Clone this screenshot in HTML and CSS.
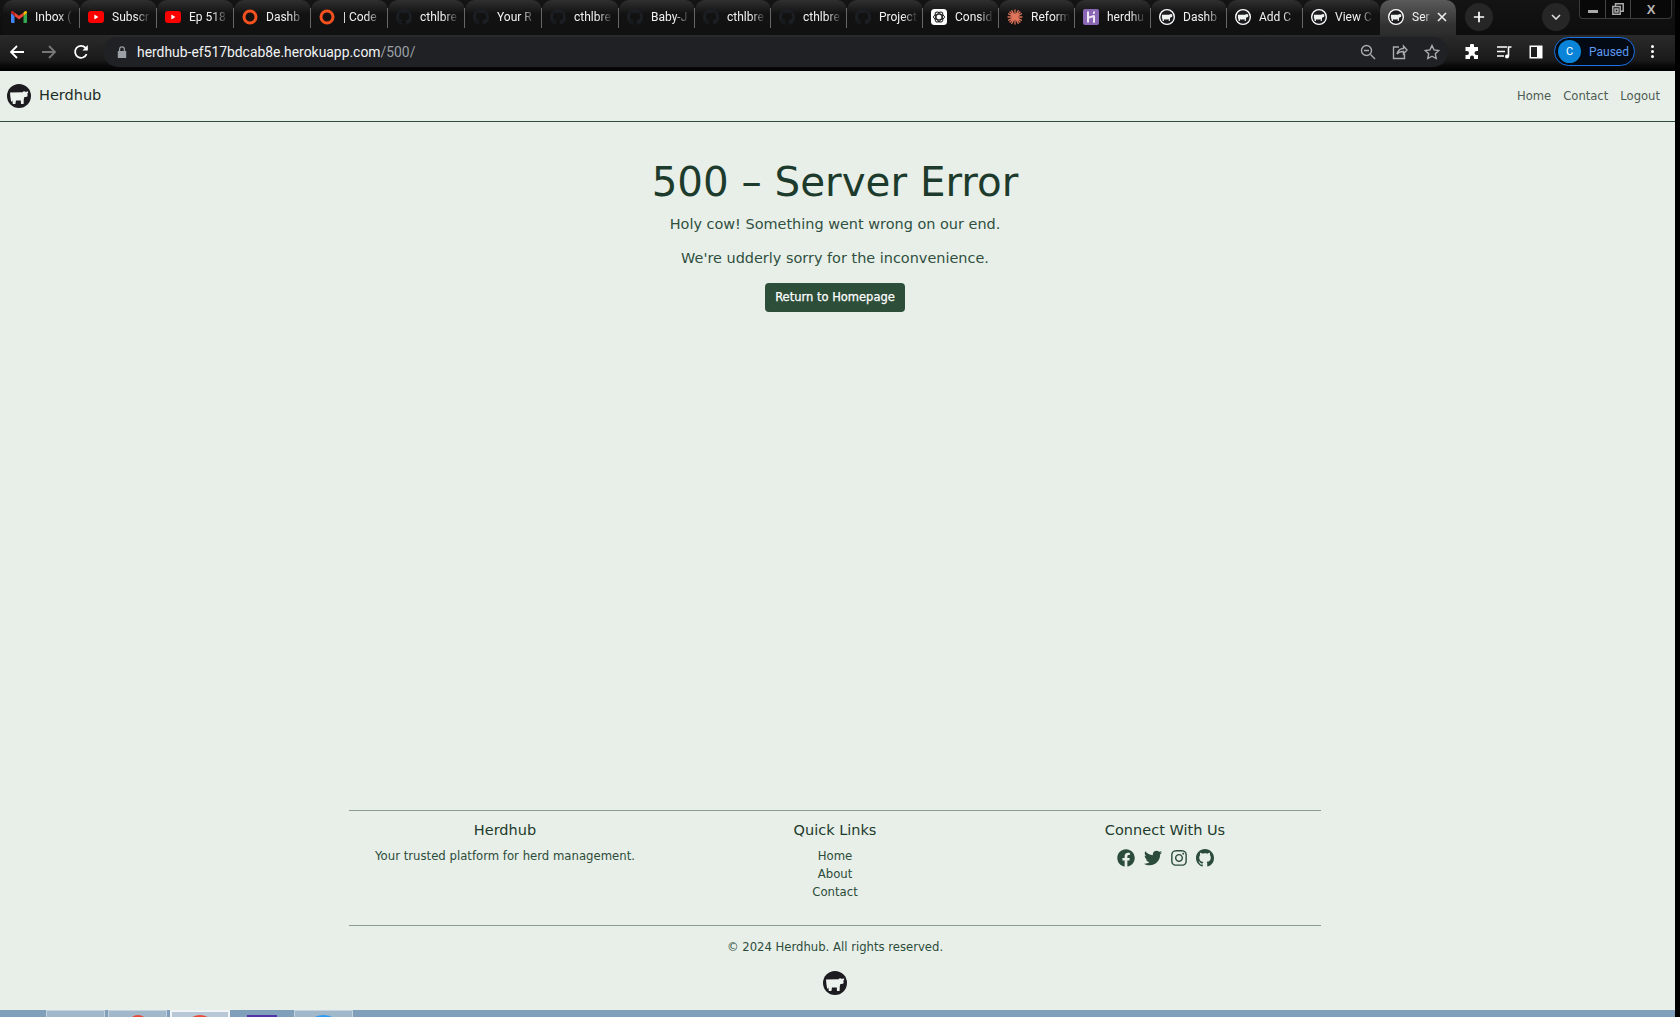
FILE: index.html
```html
<!DOCTYPE html>
<html lang="en">
<head>
<meta charset="utf-8">
<title>Server Error</title>
<link rel="stylesheet" href="styles.css">
</head>
<body>
<svg class="defs" width="0" height="0" aria-hidden="true">
  <symbol id="cow" viewBox="0 0 24 24">
    <circle cx="12" cy="12" r="12" fill="#1b1b20"/>
    <path fill="#eef2ee" d="M3 8.600 15.600 8.200 17 7 18 7.800H20L21 7.200 21.200 8.600 20.400 9.600 20.600 12.200 19 13H17.400L16.800 15.200 16.600 20H14L13.800 16.600H9L8.400 20H5.800L5.400 16.400 4.200 18 3.400 13Z"/>
  </symbol>
  <symbol id="cowring" viewBox="0 0 24 24">
    <circle cx="12" cy="12" r="11" fill="#1b1b20" stroke="#fff" stroke-width="2"/>
    <path fill="#eef2ee" d="M4.400 8.600H15.500L16.600 7.400 17.600 8H19.600L20 9 19.600 12 17.600 12.400 16.600 13.600 16.200 18H14.600L14.500 15.400 12 15.800H8.600L7.600 15.200 7.400 18H5.600L5.200 15.400 4.400 13Z"/>
  </symbol>
  <symbol id="gmail" viewBox="0 0 16 12">
    <path fill="#4285f4" d="M0 2v9a1 1 0 0 0 1 1h2.500V5z"/>
    <path fill="#34a853" d="M16 2v9a1 1 0 0 1-1 1h-2.500V5z"/>
    <path fill="#ea4335" d="M3.500 5 8 8.400 12.500 5V1.400L8 4.800 3.500 1.400z"/>
    <path fill="#c5221f" d="M0 2 3.500 5V1.400L2.400.4C1.400-.3 0 .4 0 1.600z"/>
    <path fill="#fbbc04" d="M16 2 12.500 5V1.400L13.600.4C14.600-.3 16 .4 16 1.600z"/>
  </symbol>
  <symbol id="yt" viewBox="0 0 16 12">
    <rect width="16" height="12" rx="3" fill="#f00"/>
    <path fill="#fff" d="M6.400 3.600 10.400 6 6.400 8.400z"/>
  </symbol>
  <symbol id="ring" viewBox="0 0 16 16">
    <circle cx="8" cy="8" r="6" fill="none" stroke="#f4511e" stroke-width="3"/>
  </symbol>
  <symbol id="gh" viewBox="0 0 16 16">
    <path fill="#1b1f24" d="M8 0C3.580 0 0 3.580 0 8c0 3.540 2.290 6.530 5.470 7.590.4.070.55-.17.55-.38 0-.19-.01-.82-.01-1.490-2.010.37-2.530-.49-2.690-.94-.09-.23-.48-.94-.82-1.130-.28-.15-.68-.52-.01-.53.63-.01 1.080.58 1.230.82.72 1.210 1.870.87 2.330.66.07-.52.28-.87.51-1.070-1.780-.2-3.640-.89-3.640-3.950 0-.87.31-1.590.82-2.150-.08-.2-.36-1.020.08-2.120 0 0 .67-.21 2.200.82.64-.18 1.320-.27 2-.27.68 0 1.360.09 2 .27 1.530-1.040 2.200-.82 2.200-.82.44 1.100.16 1.920.08 2.120.51.56.82 1.270.82 2.150 0 3.070-1.870 3.750-3.650 3.950.29.25.54.73.54 1.480 0 1.070-.01 1.930-.01 2.200 0 .21.15.46.55.38A8.013 8.013 0 0 0 16 8c0-4.420-3.580-8-8-8z"/>
  </symbol>
  <symbol id="gpt" viewBox="0 0 16 16">
    <rect width="16" height="16" rx="3.500" fill="#fff"/>
    <g fill="none" stroke="#222" stroke-width="1">
      <ellipse cx="8" cy="8" rx="5.500" ry="2.800"/>
      <ellipse cx="8" cy="8" rx="5.500" ry="2.800" transform="rotate(60 8 8)"/>
      <ellipse cx="8" cy="8" rx="5.500" ry="2.800" transform="rotate(120 8 8)"/>
    </g>
  </symbol>
  <symbol id="burst" viewBox="0 0 16 16">
    <path stroke="#e0745a" stroke-width="1.300" stroke-linecap="round" d="M8 1v14M1 8h14M3 3l10 10M13 3 3 13M4.800 1.600l6.400 12.800M11.200 1.600 4.800 14.400M1.600 4.800l12.800 6.400M14.400 4.800 1.600 11.200"/>
  </symbol>
  <symbol id="heroku" viewBox="0 0 16 16">
    <rect width="16" height="16" rx="2" fill="#8a67b5"/>
    <path fill="#efe9f5" d="M4 2.500h2v5l4-1.300c1.400-.4 2 .4 2 1.500v6h-2V8.200L6 9.500v4H4zM10 2.500h2.200L11.500 5H10z"/>
  </symbol>
</svg>

<div class="screen">
  <header class="chrome">
    <div class="tabstrip">
      <div class="tab"><svg class="fav fav-wide"><use href="#gmail"/></svg><span class="tab-title">Inbox (</span></div>
      <div class="tab"><svg class="fav fav-wide"><use href="#yt"/></svg><span class="tab-title">Subscr</span></div>
      <div class="tab"><svg class="fav fav-wide"><use href="#yt"/></svg><span class="tab-title">Ep 518</span></div>
      <div class="tab"><svg class="fav"><use href="#ring"/></svg><span class="tab-title">Dashb</span></div>
      <div class="tab"><svg class="fav"><use href="#ring"/></svg><span class="tab-title">| Code</span></div>
      <div class="tab"><svg class="fav"><use href="#gh"/></svg><span class="tab-title">cthlbre</span></div>
      <div class="tab"><svg class="fav"><use href="#gh"/></svg><span class="tab-title">Your R</span></div>
      <div class="tab"><svg class="fav"><use href="#gh"/></svg><span class="tab-title">cthlbre</span></div>
      <div class="tab"><svg class="fav"><use href="#gh"/></svg><span class="tab-title">Baby-J</span></div>
      <div class="tab"><svg class="fav"><use href="#gh"/></svg><span class="tab-title">cthlbre</span></div>
      <div class="tab"><svg class="fav"><use href="#gh"/></svg><span class="tab-title">cthlbre</span></div>
      <div class="tab"><svg class="fav"><use href="#gh"/></svg><span class="tab-title">Project</span></div>
      <div class="tab"><svg class="fav"><use href="#gpt"/></svg><span class="tab-title">Consid</span></div>
      <div class="tab"><svg class="fav"><use href="#burst"/></svg><span class="tab-title">Reform</span></div>
      <div class="tab"><svg class="fav"><use href="#heroku"/></svg><span class="tab-title">herdhu</span></div>
      <div class="tab"><svg class="fav"><use href="#cowring"/></svg><span class="tab-title">Dashb</span></div>
      <div class="tab"><svg class="fav"><use href="#cowring"/></svg><span class="tab-title">Add C</span></div>
      <div class="tab"><svg class="fav"><use href="#cowring"/></svg><span class="tab-title">View C</span></div>
      <div class="tab tab-active"><svg class="fav"><use href="#cowring"/></svg><span class="tab-title tab-title-short">Ser</span>
        <svg class="tab-close" viewBox="0 0 10 10"><path d="M1 1l8 8M9 1l-8 8"/></svg></div>
      <div class="newtab"><svg viewBox="0 0 14 14"><path d="M7 1v12M1 7h12"/></svg></div>
      <div class="tabsearch"><svg viewBox="0 0 10 6"><path d="M1 1l4 4 4-4"/></svg></div>
      <div class="winctl">
        <span class="winbtn winbtn-min"><i class="min-bar"></i></span>
        <span class="winbtn winbtn-max"><svg viewBox="0 0 12 12"><path d="M3.500 3V.8h7.700v7.400H8.500M.8 3.500h7.400v7.700H.8zM3 6h3v3H3z"/></svg></span>
        <span class="winbtn winbtn-close">X</span>
      </div>
    </div>
    <div class="toolbar">
      <svg class="navicon" viewBox="0 0 16 16"><path d="M15 8H2M8 2 2 8l6 6"/></svg>
      <svg class="navicon navicon-dim" viewBox="0 0 16 16"><path d="M1 8h13M8 2l6 6-6 6"/></svg>
      <svg class="navicon" viewBox="0 0 16 16"><path d="M13.600 10.200A6 6 0 1 1 12.400 3.600L14 5.200"/><path class="solid" d="M14.800 1v5.400H9.400z"/></svg>
      <div class="omnibox">
        <svg class="lock" viewBox="0 0 10 12"><path d="M2 5V3.300a3 3 0 0 1 6 0V5h1.200v7H.8V5zm1.200 0h3.600V3.300a1.800 1.800 0 0 0-3.600 0z"/></svg>
        <span class="url">herdhub-ef517bdcab8e.herokuapp.com<span class="url-path">/500/</span></span>
        <div class="omni-actions">
          <svg class="omni-icon" viewBox="0 0 16 16"><circle cx="6.500" cy="6.500" r="5"/><path d="M4 6.500h5M10.500 10.500 15 15"/></svg>
          <svg class="omni-icon" viewBox="0 0 16 16"><path d="M7 3H1.500v11.500h11V10M5 10c1-4 4-5.500 6.500-5.500V2L15 6l-3.500 4V7.500C9 7.500 6.500 8 5 10z"/></svg>
          <svg class="omni-icon" viewBox="0 0 16 16"><path d="M8 1.500l2 4.400 4.800.6-3.500 3.300.9 4.700L8 12.200l-4.200 2.300.9-4.700L1.200 6.500 6 5.900z"/></svg>
        </div>
      </div>
      <svg class="tool-icon" viewBox="0 0 16 16"><path class="solid" d="M6 1.500a2 2 0 0 1 4 0V3h4v4h-1.500a2 2 0 0 0 0 4H14v4H10v-1.500a2 2 0 0 0-4 0V15H1.500v-4H3a2 2 0 0 0 0-4H1.500V3H6z"/></svg>
      <svg class="tool-icon" viewBox="0 0 16 16"><path d="M1 3h10M1 7.500h8M1 12h7M12.500 12.500V3h3"/><circle class="solid" cx="11" cy="12.500" r="2"/></svg>
      <svg class="tool-icon" viewBox="0 0 16 16"><path class="solid" d="M1.500 1.500h13v13h-13zM3 3v10h6V3z"/></svg>
      <div class="profile"><span class="avatar">C</span><span class="paused">Paused</span></div>
      <div class="kebab"><i></i><i></i><i></i></div>
    </div>
  </header>

  <div class="page">
    <nav class="navbar">
      <a class="brand"><svg class="cow"><use href="#cow"/></svg><span class="brand-name">Herdhub</span></a>
      <div class="navlinks"><a>Home</a><a>Contact</a><a>Logout</a></div>
    </nav>
    <div class="content">
      <main class="main">
        <h1>500 – Server Error</h1>
        <p class="lead">Holy cow! Something went wrong on our end.</p>
        <p class="lead">We're udderly sorry for the inconvenience.</p>
        <a class="btn">Return to Homepage</a>
      </main>
      <footer class="footer">
        <div class="footer-cols">
          <section class="fcol">
            <h5>Herdhub</h5>
            <p>Your trusted platform for herd management.</p>
          </section>
          <section class="fcol">
            <h5>Quick Links</h5>
            <ul class="flinks"><li>Home</li><li>About</li><li>Contact</li></ul>
          </section>
          <section class="fcol">
            <h5>Connect With Us</h5>
            <div class="socials">
              <svg class="social" viewBox="0 0 512 512"><path d="M504 256C504 119 393 8 256 8S8 119 8 256c0 123.780 90.690 226.380 209.250 245V327.690h-63V256h63v-54.640c0-62.150 37-96.480 93.670-96.480 27.140 0 55.520 4.840 55.520 4.840v61h-31.280c-30.800 0-40.410 19.120-40.410 38.730V256h68.780l-11 71.690h-57.780V501C413.310 482.380 504 379.780 504 256z"/></svg>
              <svg class="social" viewBox="0 0 512 512"><path d="M459.370 151.716c.325 4.548.325 9.097.325 13.645 0 138.720-105.583 298.558-298.558 298.558-59.452 0-114.680-17.219-161.137-47.106 8.447.974 16.568 1.299 25.340 1.299 49.055 0 94.213-16.568 130.274-44.832-46.132-.975-84.792-31.188-98.112-72.772 6.498.974 12.995 1.624 19.818 1.624 9.421 0 18.843-1.300 27.614-3.573-48.081-9.747-84.143-51.980-84.143-102.985v-1.299c13.969 7.797 30.214 12.670 47.431 13.319-28.264-18.843-46.781-51.005-46.781-87.391 0-19.492 5.197-37.360 14.294-52.954 51.655 63.675 129.300 105.258 216.365 109.807-1.624-7.797-2.599-15.918-2.599-24.040 0-57.828 46.782-104.934 104.934-104.934 30.213 0 57.502 12.670 76.670 33.137 23.715-4.548 46.456-13.320 66.599-25.340-7.798 24.366-24.366 44.833-46.132 57.827 21.117-2.273 41.584-8.122 60.426-16.243-14.292 20.791-32.161 39.308-52.628 54.253z"/></svg>
              <svg class="social social-ig" viewBox="0 0 448 512"><path d="M224.100 141c-63.600 0-114.900 51.300-114.900 114.900s51.300 114.900 114.900 114.900S339 319.500 339 255.900 287.700 141 224.100 141zm0 189.600c-41.100 0-74.700-33.500-74.700-74.700s33.500-74.700 74.700-74.700 74.700 33.500 74.700 74.700-33.600 74.700-74.700 74.700zm146.400-194.300c0 14.900-12 26.800-26.800 26.800-14.900 0-26.800-12-26.800-26.800s12-26.800 26.800-26.800 26.800 12 26.800 26.800zm76.100 27.200c-1.700-35.900-9.900-67.700-36.200-93.900-26.200-26.200-58-34.400-93.900-36.200-37-2.100-147.900-2.100-184.900 0-35.800 1.700-67.600 9.900-93.900 36.100s-34.400 58-36.200 93.900c-2.100 37-2.100 147.900 0 184.900 1.700 35.900 9.900 67.700 36.200 93.900s58 34.400 93.900 36.200c37 2.100 147.900 2.100 184.900 0 35.900-1.700 67.700-9.900 93.900-36.200 26.200-26.200 34.400-58 36.200-93.900 2.100-37 2.100-147.800 0-184.800zM398.800 388c-7.800 19.600-22.900 34.700-42.600 42.600-29.500 11.700-99.500 9-132.100 9s-102.700 2.600-132.100-9c-19.600-7.800-34.700-22.900-42.600-42.600-11.700-29.500-9-99.500-9-132.100s-2.600-102.700 9-132.100c7.800-19.600 22.900-34.700 42.600-42.600 29.500-11.700 99.500-9 132.100-9s102.700-2.600 132.100 9c19.600 7.800 34.700 22.900 42.600 42.600 11.700 29.500 9 99.500 9 132.100s2.700 102.700-9 132.100z"/></svg>
              <svg class="social" viewBox="0 0 16 16"><path d="M8 0C3.580 0 0 3.580 0 8c0 3.540 2.290 6.530 5.470 7.590.4.070.55-.17.55-.38 0-.19-.01-.82-.01-1.490-2.010.37-2.530-.49-2.690-.94-.09-.23-.48-.94-.82-1.130-.28-.15-.68-.52-.01-.53.63-.01 1.080.58 1.230.82.72 1.210 1.870.87 2.330.66.07-.52.28-.87.51-1.070-1.780-.2-3.640-.89-3.640-3.950 0-.87.31-1.590.82-2.150-.08-.2-.36-1.020.08-2.120 0 0 .67-.21 2.200.82.64-.18 1.320-.27 2-.27.68 0 1.360.09 2 .27 1.530-1.040 2.200-.82 2.200-.82.44 1.100.16 1.920.08 2.120.51.56.82 1.270.82 2.150 0 3.070-1.870 3.750-3.650 3.950.29.25.54.73.54 1.480 0 1.070-.01 1.930-.01 2.200 0 .21.15.46.55.38A8.013 8.013 0 0 0 16 8c0-4.420-3.580-8-8-8z"/></svg>
            </div>
          </section>
        </div>
        <div class="copyright">
          <p>© 2024 Herdhub. All rights reserved.</p>
          <svg class="cow"><use href="#cow"/></svg>
        </div>
      </footer>
    </div>
  </div>

  <div class="taskbar">
    <span class="task"></span>
    <span class="task task-red"><i></i></span>
    <span class="task task-active"><i></i></span>
    <span class="task-purple"></span>
    <span class="task task-blue"><i></i></span>
  </div>
</div>
</body>
</html>
```

FILE: styles.css
```css
* { box-sizing: border-box; }
html, body { margin: 0; height: 100%; overflow: hidden; background: #000; }
body { font-family: "DejaVu Sans", sans-serif; color: #2c4c3b; }
.defs { display: block; height: 0; }
.screen { display: flex; flex-direction: column; height: 1017px; width: 1680px; }

/* browser chrome */
.chrome { height: 71px; width: 1675px; flex: none; background: #0c0c0c; }
.tabstrip { height: 35px; display: flex; padding-left: 3px; position: relative; background: linear-gradient(#141414, #0d0d0d); }
.tab { width: 76px; height: 35px; flex: none; display: flex; align-items: center; padding: 0 0 2px 8px; border-radius: 10px 10px 0 0; background: linear-gradient(#303030, #121212 40%, #111); position: relative; }
.tab:nth-child(-n+8), .tab:nth-child(18) { width: 77px; }
.tab::after { content: ""; position: absolute; right: 0; top: 8px; height: 20px; width: 1px; background: #666; }
.tab-active { background: linear-gradient(#5a5a5a, #333 70%, #2c2c2c); }
.tab-active::after, .tab:nth-child(18)::after { display: none; }
.fav { width: 16px; height: 16px; flex: none; }
.tab-title { font: 12px/16px "Roboto", sans-serif; color: #f2f2f2; margin-left: 8px; width: 39px; white-space: nowrap; overflow: hidden; -webkit-mask-image: linear-gradient(90deg, #000 60%, transparent); mask-image: linear-gradient(90deg, #000 60%, transparent); }
.tab-title-short { width: 20px; }
.tab-close { width: 10px; height: 10px; margin-left: 5px; fill: none; stroke: #eee; stroke-width: 1.6; }
.newtab { width: 28px; height: 28px; border-radius: 50%; margin: 3px 0 0 9px; background: #262626; display: flex; align-items: center; justify-content: center; flex: none; }
.newtab svg { width: 12px; height: 12px; fill: none; stroke: #fff; stroke-width: 2; }
.tabsearch { width: 28px; height: 28px; border-radius: 50%; margin: 3px 0 0 49px; background: #262626; display: flex; align-items: center; justify-content: center; flex: none; }
.tabsearch svg { width: 10px; height: 6px; fill: none; stroke: #ddd; stroke-width: 1.6; }
.winctl { display: flex; height: 19px; width: 93px; margin-left: 9px; border: 1px solid #3a3a3a; border-top: 0; border-radius: 0 0 4px 4px; background: #080808; flex: none; }
.winbtn { display: flex; align-items: center; justify-content: center; border-right: 1px solid #444; color: #b5b5b5; }
.winbtn-min { width: 26px; }
.winbtn-max { width: 25px; }
.winbtn-close { flex: 1; border-right: 0; font: bold 13px "Liberation Sans", sans-serif; }
.min-bar { width: 10px; height: 3px; background: #aaa; margin-top: 4px; }
.winbtn-max svg { width: 12px; height: 12px; fill: none; stroke: #aaa; stroke-width: 1.5; }

.toolbar { height: 36px; display: flex; align-items: center; padding: 0 0 3px 9px; background: linear-gradient(#2a2a2a, #1a1a1a 70%, #0a0a0a 85%, #000); }
.navicon { width: 16px; height: 16px; flex: none; margin-right: 16px; fill: none; stroke: #fff; stroke-width: 1.8; }
.navicon-dim { stroke: #777; }
.solid { fill: currentColor; stroke: none; }
.navicon .solid { fill: #fff; }
.omnibox { width: 1345px; height: 30px; margin-left: -2px; border-radius: 15px; background: #202124; display: flex; align-items: center; padding-left: 14px; flex: none; }
.lock { width: 10px; height: 12px; fill: #9aa0a6; flex: none; }
.url { font: 13.9px "Roboto", sans-serif; color: #f1f3f4; margin-left: 10px; }
.url-path { color: #9aa0a6; }
.omni-actions { margin-left: auto; display: flex; gap: 16px; padding-right: 8px; }
.omni-icon { width: 16px; height: 16px; fill: none; stroke: #a8adb2; stroke-width: 1.400; }
.tool-icon { width: 16px; height: 16px; flex: none; fill: none; stroke: #fff; stroke-width: 1.600; color: #fff; margin-left: 16px; }
.profile { display: flex; align-items: center; width: 81px; height: 29px; margin-left: 10px; border: 1px solid #1a73e8; border-radius: 15px; background: #040a14; flex: none; padding-left: 3px; }
.avatar { width: 23px; height: 23px; border-radius: 50%; background: #0a84d8; color: #fff; font: 11px/23px "Roboto", sans-serif; text-align: center; }
.paused { font: 12px "Roboto", sans-serif; color: #5b9bf5; margin-left: 8px; }
.kebab { display: flex; flex-direction: column; gap: 2px; margin-left: 16px; }
.kebab i { width: 3px; height: 3px; background: #fff; border-radius: 50%; }

/* site */
.page { flex: 1; min-height: 0; width: 1675px; background: #e8efe8; display: flex; flex-direction: column; }
.navbar { height: 51px; flex: none; display: flex; align-items: center; justify-content: space-between; padding: 0 15px 0 7px; border-bottom: 1px solid #2d4f3b; }
.brand { display: flex; align-items: center; gap: 8px; font-size: 14.5px; color: #1b2c25; }
.brand-name { padding-bottom: 2px; }
.cow { width: 24px; height: 24px; display: block; flex: none; }
.navlinks { display: flex; gap: 12px; font-size: 11.6px; color: #4d5c54; }
.content { flex: 1; min-height: 0; display: flex; flex-direction: column; padding-right: 5px; }
.main { flex: 1; min-height: 0; display: flex; flex-direction: column; align-items: center; padding-top: 36px; }
h1 { margin: 0 0 6px; font-size: 40.4px; line-height: 48px; font-weight: 400; color: #1d3b2c; }
.lead { margin: 0 0 10px; font-size: 14.45px; line-height: 24px; color: #2f4f3f; }
.btn { display: block; width: 140px; height: 29px; margin-top: 3px; background: #2d4f3a; color: #fff; border-radius: 4px; font-size: 11.5px; -webkit-text-stroke: 0.25px #fff; line-height: 29px; text-align: center; }
.footer { flex: none; width: 972px; margin: 0 auto; border-top: 1px solid #8a9e90; }
.footer-cols { display: grid; grid-template-columns: repeat(3, 330px); margin: 0 -9px; height: 114px; padding-top: 9px; text-align: center; }
h5 { margin: 0 0 7px; font-size: 14.5px; line-height: 20px; font-weight: 400; color: #1d3b2c; }
.fcol p { margin: 0; font-size: 11.7px; line-height: 18px; }
.flinks { list-style: none; margin: 0; padding: 0; font-size: 11.7px; line-height: 18px; }
.socials { display: flex; justify-content: center; gap: 9px; margin-top: 9px; }
.social { width: 18px; height: 18px; fill: #2c4c3b; flex: none; }
.social-ig { width: 16px; }
.copyright { border-top: 1px solid #8a9e90; padding-top: 12px; height: 85px; display: flex; flex-direction: column; align-items: center; }
.copyright p { margin: 0 0 15px; font-size: 11.65px; line-height: 18px; }

/* taskbar */
.taskbar { height: 7px; width: 1675px; flex: none; background: #7f9fbb; display: flex; align-items: flex-start; padding-left: 46px; overflow: hidden; }
.task { width: 59px; height: 7px; background: #a1b7ca; border: 1px solid #c4d2dd; border-bottom: 0; margin-right: 3px; display: flex; justify-content: center; flex: none; }
.task i { width: 16px; height: 12px; border-radius: 50%; background: #e84a3a; margin-top: 4px; }
.task-active { width: 60px; background: #b8c8d6; border: 2px solid #f0f4f7; border-bottom: 0; }
.task-active i { width: 20px; margin-top: 3px; }
.task-purple { width: 30px; height: 2px; margin: 5px 0 0 14px; background: #5233a8; flex: none; }
.task-blue { margin-left: 17px; }
.task-blue i { width: 23px; background: #2f9bf0; }
```
